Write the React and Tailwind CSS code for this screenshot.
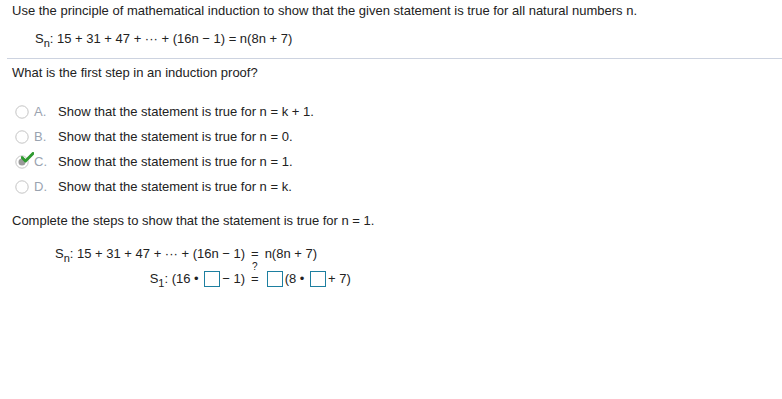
import React from 'react';

const options = [
    { letter: 'A.', text: 'Show that the statement is true for n = k + 1.' },
    { letter: 'B.', text: 'Show that the statement is true for n = 0.' },
    { letter: 'C.', text: 'Show that the statement is true for n = 1.', checked: true },
    { letter: 'D.', text: 'Show that the statement is true for n = k.' },
];

const Box = () => (
    <span className="inline-block w-[16px] h-[16px] border-[1.5px] border-[#1d7fa0] align-[-4px] mx-[2px] bg-white" />
);

const Sub = ({ children }) => <sub className="text-[11px] align-[-1px] leading-none">{children}</sub>;

const Radio = ({ checked }) => (
    <span className="relative w-[14px] h-[14px] shrink-0">
        <svg width="14" height="14" viewBox="0 0 14 14">
            <circle cx="7" cy="7" r="6.2" fill="white" stroke="#c4c4c4" strokeWidth="1" />
            {checked && <circle cx="7" cy="7" r="3.5" fill="#9a9a9a" />}
        </svg>
        {checked && (
            <svg className="absolute left-[6px] top-[-3px]" width="13" height="11" viewBox="0 0 13 11">
                <path d="M1 5.5 L4.5 9 L12 1.5" fill="none" stroke="#2f9a2f" strokeWidth="3" strokeLinecap="round" strokeLinejoin="round" />
            </svg>
        )}
    </span>
);

const App = () => {
    return (
        <div className="w-[782px] h-[399px] bg-white text-[#222] text-[13px] leading-[16px] font-['Liberation_Sans',Arial,sans-serif]">
            <div className="pt-[3px] pl-[12px]">
                Use the principle of mathematical induction to show that the given statement is true for all natural numbers n.
            </div>
            <div className="pt-[12px] pl-[35px]">
                S<Sub>n</Sub>: 15 + 31 + 47 + ··· + (16n − 1) = n(8n + 7)
            </div>

            <div className="mt-[11px] ml-[7px] border-t border-[#cdd3e0]" />

            <div className="pt-[6px] pl-[12px]">What is the first step in an induction proof?</div>

            {/* Opções */}
            <div className="pt-[23px] pl-[15px] flex flex-col gap-[9px]">
                {options.map((o) => (
                    <div key={o.letter} className="flex items-center h-[16px]">
                        <Radio checked={o.checked} />
                        <span className="w-[29px] pl-[5px] text-[#9aa3b0]">{o.letter}</span>
                        <span>{o.text}</span>
                    </div>
                ))}
            </div>

            <div className="pt-[18px] pl-[12px]">Complete the steps to show that the statement is true for n = 1.</div>

            {/* Passos */}
            <div className="pt-[17px] pl-[55px] grid grid-cols-[auto_auto_auto] w-fit gap-y-[9px] items-end">
                <div className="justify-self-end">
                    S<Sub>n</Sub>: 15 + 31 + 47 + ··· + (16n − 1)
                </div>
                <div className="px-[6px] text-center">=</div>
                <div>n(8n + 7)</div>

                <div className="justify-self-end">
                    S<Sub>1</Sub>: (16 • <Box />− 1)
                </div>
                <div className="px-[6px] text-center">
                    <span className="relative">
                        <span className="absolute left-[1px] top-[-10px] text-[10px] leading-[12px]">?</span>
                        =
                    </span>
                </div>
                <div>
                    <Box />(8 • <Box />+ 7)
                </div>
            </div>
        </div>
    );
};

export default App;
